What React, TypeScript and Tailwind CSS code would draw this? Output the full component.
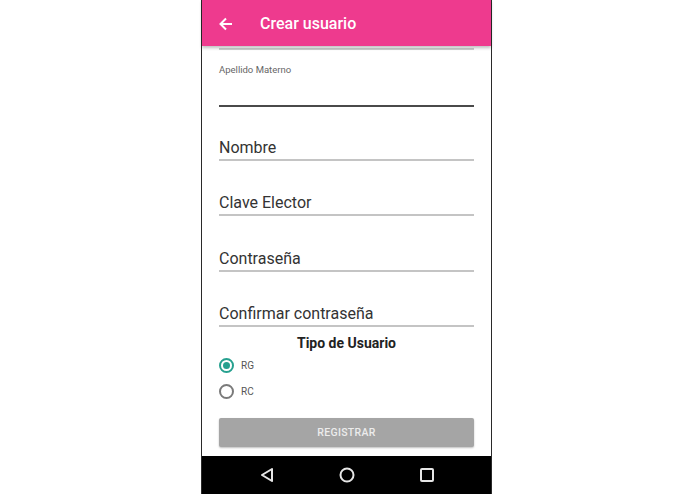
import React, { useState } from 'react';

const fields = ['Nombre', 'Clave Elector', 'Contraseña', 'Confirmar contraseña'];

export default function App() {
  const [tipo, setTipo] = useState<'RG' | 'RC'>('RG');

  return (
    <div className="w-[695px] h-[494px] bg-white flex" style={{ fontFamily: 'Roboto, "Noto Sans", sans-serif' }}>
      <div className="ml-[201px] w-[291px] h-full flex flex-col border-x border-[#2a2a2a] bg-white">
        {/* APP BAR */}
        <div className="relative z-10 h-[46px] shrink-0 bg-[#ee3a8e] flex items-center shadow-[0_2px_3px_rgba(0,0,0,0.25)]">
          <svg width="14" height="14" viewBox="0 0 14 14" className="ml-[17px] mt-[1px]">
            <path d="M13 7H2M7 1.5L1.5 7 7 12.5" fill="none" stroke="#fff" strokeWidth="2" />
          </svg>
          <span className="ml-[27px] mt-[1px] text-white text-[16px] font-medium">Crear usuario</span>
        </div>

        {/* FORM */}
        <div className="flex-1 px-[17px] flex flex-col">
          <div className="mt-[2px] h-[2px] bg-[#cfcfcf]" />

          <div className="mt-[14px] h-[12px] leading-[12px] text-[9.5px] text-[#666]">Apellido Materno</div>
          <div className="mt-[29px] h-[2px] bg-[#4a4a4a]" />

          {fields.map((f, i) => (
            <div key={f} className={i === 0 ? 'mt-[31px]' : 'mt-[32.3px]'}>
              <div className="h-[20px] leading-[20px] text-[16px] text-[#333]">{f}</div>
              <div className="mt-[1px] h-[2px] bg-[#c4c4c4]" />
            </div>
          ))}

          <div className="mt-[8px] h-[16px] leading-[16px] text-center text-[14px] font-bold text-[#222]">Tipo de Usuario</div>

          <div className="mt-[7px] flex flex-col gap-[11px]">
            {(['RG', 'RC'] as const).map((t) => (
              <div key={t} onClick={() => setTipo(t)} className="flex items-center h-[15px] cursor-pointer">
                <div
                  className={`w-[15px] h-[15px] rounded-full border-2 flex items-center justify-center ${
                    tipo === t ? 'border-[#26a08f]' : 'border-[#7a7a7a]'
                  }`}
                >
                  {tipo === t && <div className="w-[7px] h-[7px] rounded-full bg-[#26a08f]" />}
                </div>
                <span className="ml-[7px] text-[10px] text-[#555]">{t}</span>
              </div>
            ))}
          </div>

          <button className="mt-[19px] h-[29px] w-full rounded-[2px] bg-[#a5a5a5] shadow-[0_1px_2px_rgba(0,0,0,0.25)] text-[10.5px] font-medium text-[#ececec] tracking-[0.3px]">
            REGISTRAR
          </button>
        </div>

        {/* NAV BAR */}
        <div className="h-[38px] shrink-0 bg-black flex items-center justify-center gap-[60px]">
          <svg width="20" height="20" viewBox="0 0 20 20">
            <path d="M15 4L5 10l10 6z" fill="none" stroke="#e6e6e6" strokeWidth="2" strokeLinejoin="round" />
          </svg>
          <svg width="20" height="20" viewBox="0 0 20 20">
            <circle cx="10" cy="10" r="6.5" fill="none" stroke="#e6e6e6" strokeWidth="2" />
          </svg>
          <svg width="20" height="20" viewBox="0 0 20 20">
            <rect x="4" y="4" width="12" height="12" rx="1" fill="none" stroke="#e6e6e6" strokeWidth="2" />
          </svg>
        </div>
      </div>
    </div>
  );
}
